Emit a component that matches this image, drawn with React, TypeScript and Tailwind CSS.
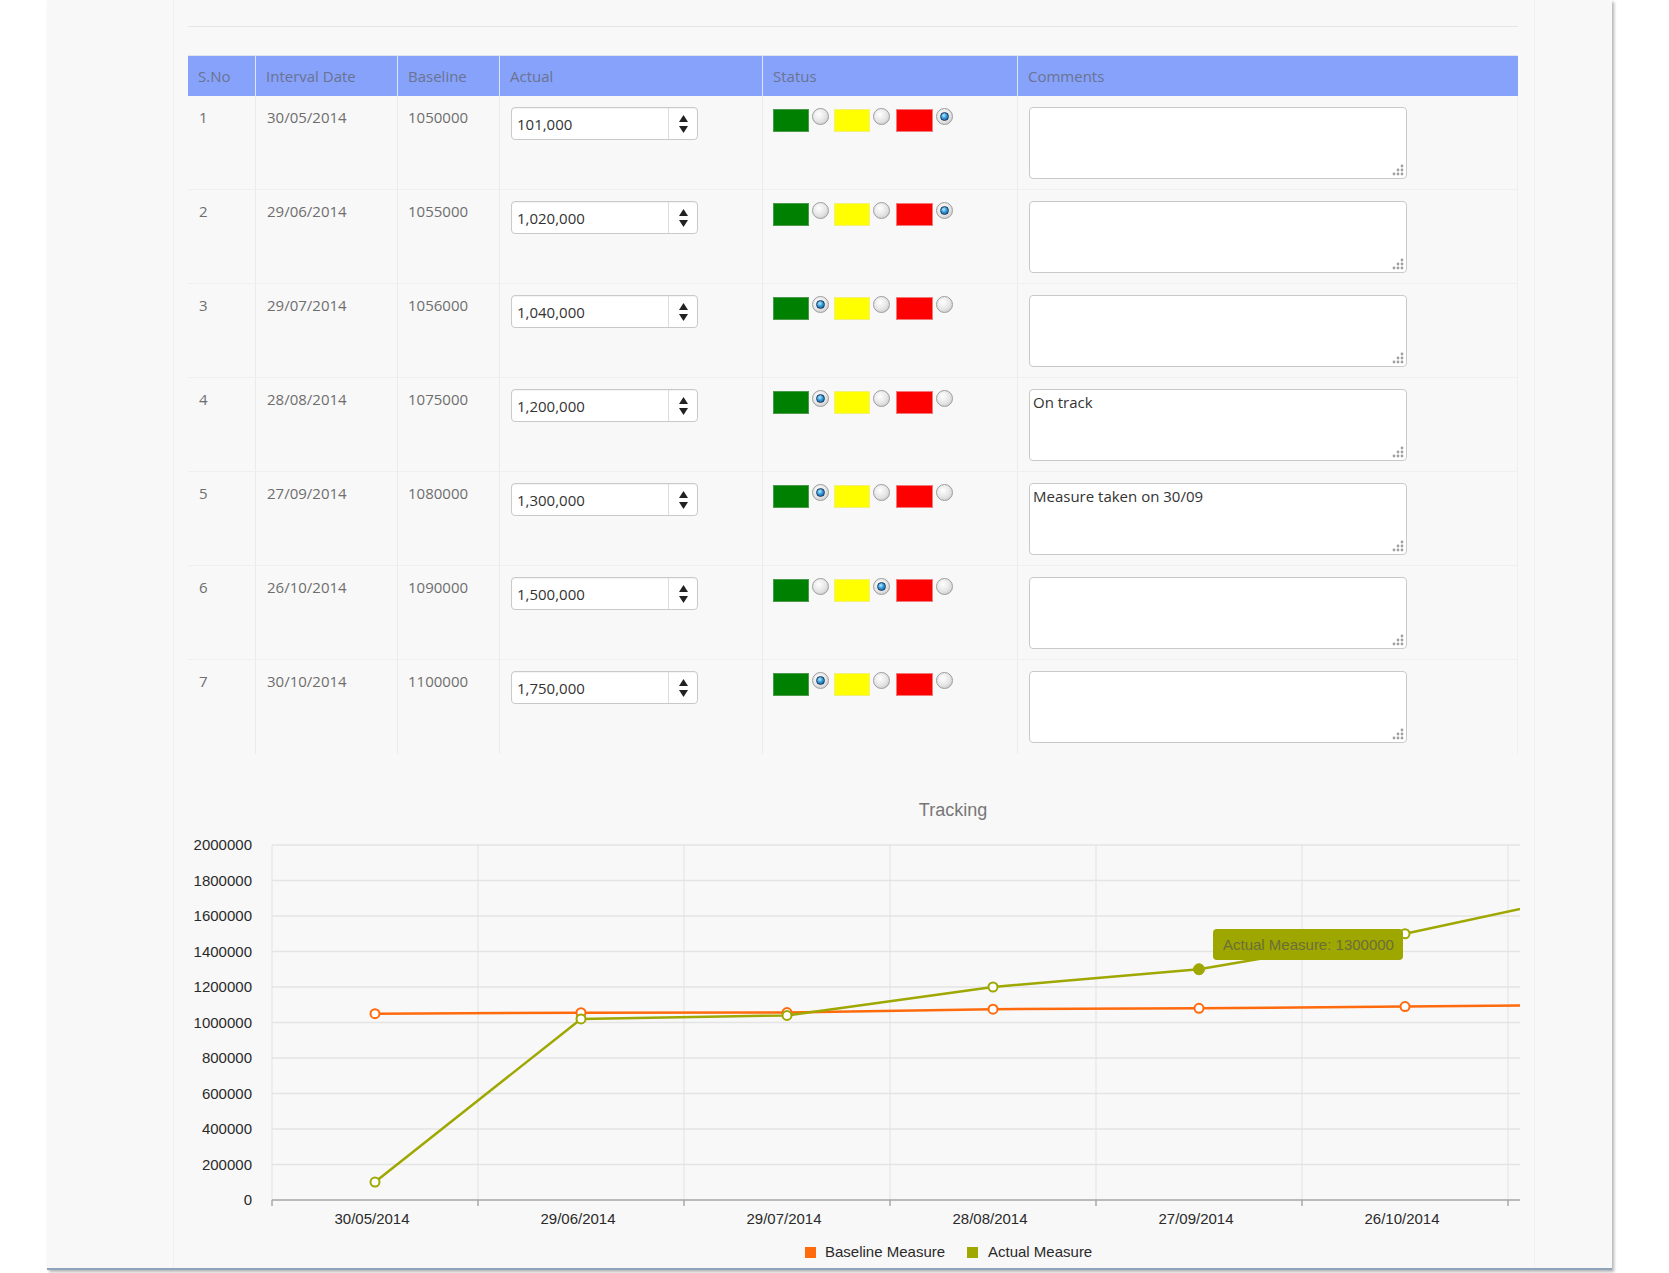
import React from "react";

type Row = {
  n: number;
  date: string;
  base: string;
  actual: string;
  status: 0 | 1 | 2;
  comment: string;
};

const rows: Row[] = [
  { n: 1, date: "30/05/2014", base: "1050000", actual: "101,000", status: 2, comment: "" },
  { n: 2, date: "29/06/2014", base: "1055000", actual: "1,020,000", status: 2, comment: "" },
  { n: 3, date: "29/07/2014", base: "1056000", actual: "1,040,000", status: 0, comment: "" },
  { n: 4, date: "28/08/2014", base: "1075000", actual: "1,200,000", status: 0, comment: "On track" },
  { n: 5, date: "27/09/2014", base: "1080000", actual: "1,300,000", status: 0, comment: "Measure taken on 30/09" },
  { n: 6, date: "26/10/2014", base: "1090000", actual: "1,500,000", status: 1, comment: "" },
  { n: 7, date: "30/10/2014", base: "1100000", actual: "1,750,000", status: 0, comment: "" },
];

const cols = "grid grid-cols-[67px_142px_102px_263px_255px_501px]";

function Radio({ on }: { on: boolean }) {
  return (
    <div className="w-[17px] h-[17px] rounded-full border border-[#9c9c9c] bg-[radial-gradient(circle_at_40%_35%,#ffffff_0%,#e4e4e4_55%,#bdbdbd_100%)] flex items-center justify-center shrink-0">
      {on && (
        <div className="w-[9px] h-[9px] rounded-full border border-[#1d3a58] bg-[radial-gradient(circle_at_40%_35%,#b8ecff_0%,#2f9be0_45%,#0b4f8c_100%)]" />
      )}
    </div>
  );
}

function Status({ s }: { s: number }) {
  return (
    <div className="flex items-start pt-[12px] pl-[10px]">
      <div className="mt-[1px] w-[36px] h-[23px] bg-[#008000] border border-[#4b9a4b]" />
      <div className="ml-[3px]"><Radio on={s === 0} /></div>
      <div className="ml-[5px] mt-[1px] w-[36px] h-[23px] bg-[#ffff00] border border-[#f0f07a]" />
      <div className="ml-[3px]"><Radio on={s === 1} /></div>
      <div className="ml-[6px] mt-[1px] w-[37px] h-[23px] bg-[#ff0000] border border-[#f07a7a]" />
      <div className="ml-[3px]"><Radio on={s === 2} /></div>
    </div>
  );
}

function Spinner({ value }: { value: string }) {
  return (
    <div className="pt-[11px] pl-[11px]">
      <div className="w-[187px] h-[33px] rounded-[4px] border border-[#c9c9c9] bg-white flex overflow-hidden shadow-[inset_0_1px_1px_rgba(0,0,0,0.05)]">
        <input
          type="text"
          defaultValue={value}
          className="w-[156px] h-full pl-[5px] text-[15px] text-[#333] bg-transparent outline-none font-['Open_Sans',sans-serif]"
        />
        <div className="w-[30px] h-full border-l border-[#dcdcdc] flex flex-col items-center justify-center gap-[4px]">
          <svg width="9" height="7" viewBox="0 0 9 7"><path d="M4.5 0 L9 7 L0 7 Z" fill="#222" /></svg>
          <svg width="9" height="7" viewBox="0 0 9 7"><path d="M0 0 L9 0 L4.5 7 Z" fill="#222" /></svg>
        </div>
      </div>
    </div>
  );
}

function Comment({ text }: { text: string }) {
  return (
    <div className="pt-[11px] pl-[11px]">
      <div className="relative w-[378px] h-[72px]">
        <textarea
          defaultValue={text}
          className="w-full h-full resize-none rounded-[4px] border border-[#c9c9c9] bg-white px-[3px] pt-[2px] text-[15px] leading-[20px] text-[#333] outline-none font-['Open_Sans',sans-serif]"
        />
        <svg className="absolute right-[3px] bottom-[3px]" width="12" height="12" viewBox="0 0 12 12">
          {[
            [10, 2],
            [10, 6],
            [6, 6],
            [10, 10],
            [6, 10],
            [2, 10],
          ].map(([cx, cy], i) => (
            <circle key={i} cx={cx} cy={cy} r="1.4" fill="#a0a0a0" />
          ))}
        </svg>
      </div>
    </div>
  );
}

const OFFX = 188;
const plotL = 84;
const plotTop = 91;
const plotBot = 446;
const catW = 206;
const yv = (v: number) => plotBot - (v * (plotBot - plotTop)) / 2000000;
const xc = (k: number) => plotL + catW * (k + 0.5);

const baseline = [1050000, 1055000, 1056000, 1075000, 1080000, 1090000, 1100000];
const actual = [101000, 1020000, 1040000, 1200000, 1300000, 1500000, 1750000];
const xlabels = ["30/05/2014", "29/06/2014", "29/07/2014", "28/08/2014", "27/09/2014", "26/10/2014"];

const ORANGE = "#ff6a0d";
const OLIVE = "#9ea800";

function Chart() {
  const W = 1332;
  const H = 512;
  const grid = Array.from({ length: 11 }, (_, i) => i);
  const vlines = Array.from({ length: 7 }, (_, i) => plotL + catW * i);
  return (
    <svg width={W} height={H} viewBox={`0 0 ${W} ${H}`} className="block" style={{ fontFamily: "'Liberation Sans', Arial, sans-serif" }}>
      <text x={953 - OFFX} y={62} textAnchor="middle" fontSize="18" fill="#777">
        Tracking
      </text>
      {grid.map((i) => {
        const y = plotTop + ((plotBot - plotTop) / 10) * i;
        return <line key={i} x1={plotL} x2={W} y1={y} y2={y} stroke="#e4e4e4" strokeWidth="1.5" />;
      })}
      {vlines.map((x, i) => (
        <line key={i} x1={x} x2={x} y1={plotTop} y2={plotBot} stroke="#e2e2e2" strokeWidth="1" />
      ))}
      <line x1={plotL} x2={W} y1={plotBot} y2={plotBot} stroke="#aaaaaa" strokeWidth="1.5" />
      {vlines.map((x, i) => (
        <line key={"t" + i} x1={x} x2={x} y1={plotBot} y2={plotBot + 6} stroke="#aaaaaa" strokeWidth="1.5" />
      ))}
      {grid.map((i) => {
        const v = 2000000 - i * 200000;
        const y = plotTop + ((plotBot - plotTop) / 10) * i;
        return (
          <text key={"yl" + i} x={64} y={y + 5} textAnchor="end" fontSize="15" fill="#2a2a2a">
            {v}
          </text>
        );
      })}
      {xlabels.map((l, k) => (
        <text key={l} x={xc(k) - 3} y={470} textAnchor="middle" fontSize="15" fill="#2a2a2a">
          {l}
        </text>
      ))}
      <polyline
        points={baseline.map((v, k) => `${xc(k)},${yv(v)}`).join(" ")}
        fill="none"
        stroke={ORANGE}
        strokeWidth="2.5"
      />
      <polyline
        points={actual.map((v, k) => `${xc(k)},${yv(v)}`).join(" ")}
        fill="none"
        stroke={OLIVE}
        strokeWidth="2.5"
      />
      {baseline.map((v, k) => (
        <circle key={"b" + k} cx={xc(k)} cy={yv(v)} r="4.5" fill="#fff" stroke={ORANGE} strokeWidth="2" />
      ))}
      {actual.map((v, k) =>
        k === 4 ? (
          <circle key={"a" + k} cx={xc(k)} cy={yv(v)} r="5.5" fill={OLIVE} stroke={OLIVE} strokeWidth="1" />
        ) : (
          <circle key={"a" + k} cx={xc(k)} cy={yv(v)} r="4.5" fill="#fff" stroke={OLIVE} strokeWidth="2" />
        )
      )}
      <rect x={1025} y={175} width={190} height={31} rx="4" fill="#9ea600" />
      <text x={1035} y={196} fontSize="15" fill="#6b6e3a">
        Actual Measure: 1300000
      </text>
      <rect x={617} y={493} width={11} height={11} fill={ORANGE} />
      <text x={637} y={503} fontSize="15" fill="#2a2a2a">
        Baseline Measure
      </text>
      <rect x={779} y={493} width={11} height={11} fill={OLIVE} />
      <text x={800} y={503} fontSize="15" fill="#2a2a2a">
        Actual Measure
      </text>
    </svg>
  );
}

export default function App() {
  return (
    <div className="min-h-[1273px] bg-white font-['Open_Sans',sans-serif]">
      <div className="ml-[47px] w-[1565px] h-[1270px] bg-[#f8f8f8] border-b-2 border-[#8ea3bc] shadow-[2px_2px_3px_rgba(0,0,0,0.3)]">
        <div className="ml-[126px] w-[1362px] h-full border-x border-[#edf0f6] px-[14px]">
          <div className="pt-[26px]">
            <div className="h-px w-[1330px] bg-[#e6e6e6]" />
          </div>
          <div className="mt-[28px] w-[1330px]">
            <div className={`${cols} h-[41px] bg-[#86a2fb] border-t border-[#dfe4ef]`}>
              {["S.No", "Interval Date", "Baseline", "Actual", "Status", "Comments"].map((h, i) => (
                <div
                  key={h}
                  className={`flex items-center pl-[10px] text-[15px] text-[#6b7391] ${i > 0 ? "border-l border-[#dde5fb]" : ""}`}
                >
                  {h}
                </div>
              ))}
            </div>
            {rows.map((r, idx) => (
              <div
                key={r.n}
                className={`${cols} h-[94px] border-r border-[#efefef] ${idx < rows.length - 1 ? "border-b border-[#ebebeb]" : ""}`}
              >
                <div className="pt-[11px] pl-[11px] text-[15px] leading-[20px] text-[#6e6e6e]">{r.n}</div>
                <div className="pt-[11px] pl-[11px] text-[15px] leading-[20px] text-[#6e6e6e] border-l border-[#ebebeb]">{r.date}</div>
                <div className="pt-[11px] pl-[10px] text-[15px] leading-[20px] text-[#6e6e6e] border-l border-[#ebebeb]">{r.base}</div>
                <div className="border-l border-[#ebebeb]">
                  <Spinner value={r.actual} />
                </div>
                <div className="border-l border-[#ebebeb]">
                  <Status s={r.status} />
                </div>
                <div className="border-l border-[#ebebeb]">
                  <Comment text={r.comment} />
                </div>
              </div>
            ))}
          </div>
          <Chart />
        </div>
      </div>
    </div>
  );
}
